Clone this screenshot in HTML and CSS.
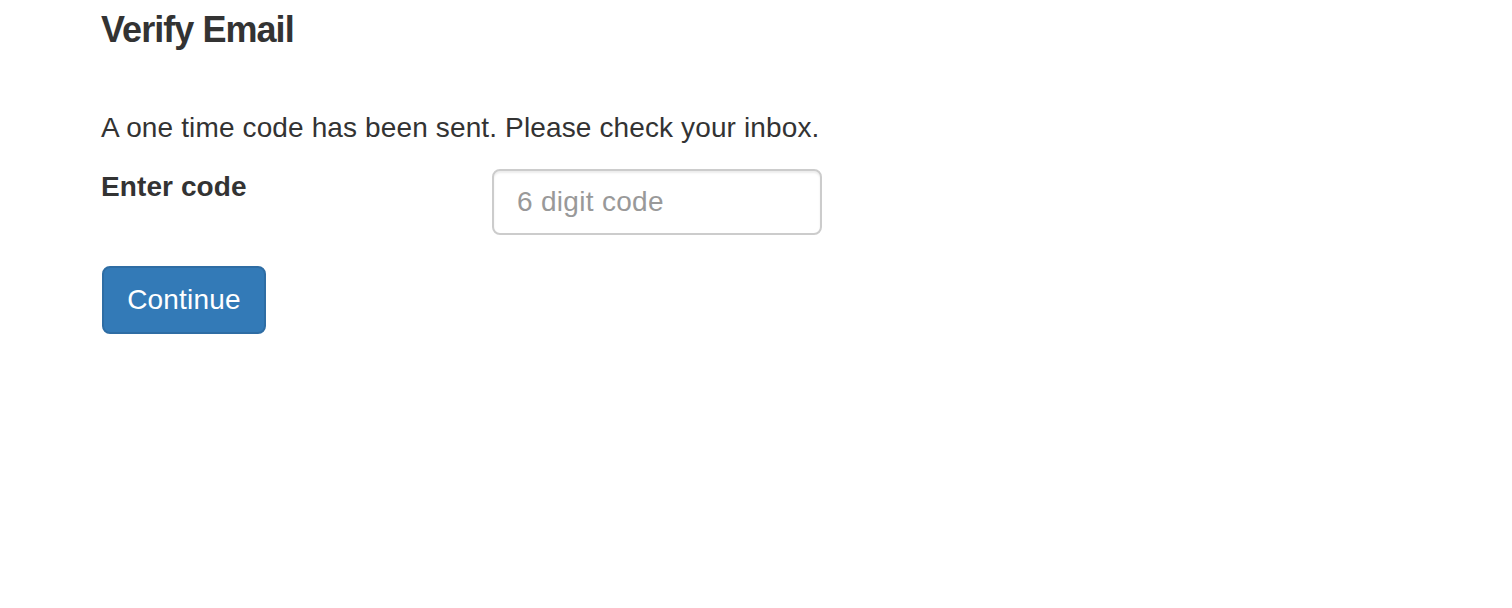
FILE: index.html
```html
<!DOCTYPE html>
<html lang="en">
<head>
<meta charset="utf-8">
<title>Verify Email</title>
<link rel="stylesheet" href="styles.css">
</head>
<body>
<main class="page">
  <h1 class="title">Verify Email</h1>
  <p class="lead">A one time code has been sent. Please check your inbox.</p>
  <form class="form">
    <div class="row">
      <label class="label" for="code">Enter code</label>
      <input class="input" id="code" type="text" placeholder="6 digit code">
    </div>
    <button class="btn" type="button">Continue</button>
  </form>
</main>
</body>
</html>
```

FILE: styles.css
```css
* { box-sizing: border-box; }
html, body { margin: 0; padding: 0; background: #fff; }
body {
  font-family: "Liberation Sans", Arial, Helvetica, sans-serif;
  color: #333;
  font-size: 28px;
}
.page {
  padding: 10px 0 0 101px;
}
.title {
  margin: 0;
  font-size: 36px;
  line-height: 39.6px;
  font-weight: 700;
  letter-spacing: -0.95px;
}
.lead {
  margin: 58.7px 0 0;
  font-size: 28px;
  line-height: 40px;
  letter-spacing: 0.13px;
}
.form {
  margin-top: 19px;
  display: flex;
  flex-direction: column;
  align-items: flex-start;
}
.row {
  display: flex;
  align-items: flex-start;
}
.label {
  width: 391px;
  font-weight: 700;
  line-height: 40px;
  letter-spacing: 0.1px;
}
.input {
  margin-top: 2px;
  width: 330px;
  height: 66px;
  border: 2px solid #ccc;
  border-radius: 8px;
  padding: 0 23px;
  font-family: inherit;
  font-size: 28px;
  letter-spacing: 0.3px;
  color: #555;
  background: #fff;
  box-shadow: inset 0 2px 2px rgba(0,0,0,0.075);
  outline: none;
}
.input::placeholder { color: #999; }
.btn {
  margin: 31px 0 0 1px;
  width: 164px;
  height: 68px;
  padding: 0 20px;
  background: #337ab7;
  border: 2px solid #2e6da4;
  border-radius: 8px;
  color: #fff;
  font-family: inherit;
  font-size: 28px;
  line-height: 40px;
  letter-spacing: 0.2px;
  cursor: pointer;
}
```
